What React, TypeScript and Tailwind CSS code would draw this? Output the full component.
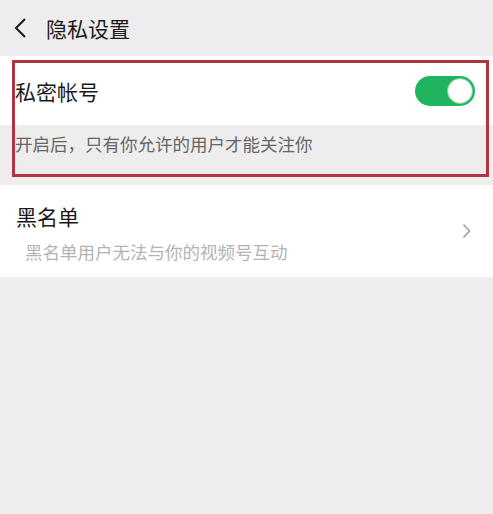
const font = { fontFamily: '"Noto Sans CJK SC", "Noto Sans", sans-serif' };

const Toggle = () => (
  <div className="flex h-[30px] w-[60px] items-center justify-end rounded-full bg-[#1fb55e] p-[2px]">
    <div className="h-[26px] w-[26px] rounded-full border border-[#7fcf9c] bg-white" />
  </div>
);

export default function App() {
  return (
    <div
      className="relative flex h-[514px] w-full flex-col bg-[#ededed] text-[#1a1a1a]"
      style={font}
    >
      <header className="flex h-[56px] items-center bg-[#ededed]">
        <svg
          className="ml-[13px] h-[22px] w-[14px]"
          viewBox="0 0 14 22"
          fill="none"
          stroke="#1a1a1a"
          strokeWidth="2"
        >
          <path d="M12 2 L3 11 L12 20" />
        </svg>
        <h1 className="ml-[19px] text-[21px] leading-[28px]">隐私设置</h1>
      </header>

      <div className="flex h-[69px] items-center justify-between bg-white pl-[15px] pr-[18px]">
        <span className="text-[21px] leading-[28px]">私密帐号</span>
        <Toggle />
      </div>
      <div className="h-[60px] bg-[#ededed] pl-[15px] pt-[7px]">
        <p className="text-[17.5px] leading-[24px] text-[#666666]">
          开启后，只有你允许的用户才能关注你
        </p>
      </div>

      <div className="flex h-[92px] items-center justify-between bg-white pr-[22px]">
        <div className="flex flex-col pl-[16px] pt-[4px]">
          <span className="text-[21px] leading-[28px]">黑名单</span>
          <span className="ml-[9px] mt-[10px] text-[17.5px] leading-[24px] text-[#b3b3b3]">
            黑名单用户无法与你的视频号互动
          </span>
        </div>
        <svg
          className="h-[16px] w-[9px]"
          viewBox="0 0 9 16"
          fill="none"
          stroke="#a0a0a0"
          strokeWidth="1.6"
        >
          <path d="M1.5 1.5 L7.5 8 L1.5 14.5" />
        </svg>
      </div>

      <div className="flex-1 bg-[#eeedef]" />

      <div className="pointer-events-none absolute left-[12px] top-[60px] h-[117px] w-[477px] border-[3px] border-[#b0343f]" />
    </div>
  );
}
